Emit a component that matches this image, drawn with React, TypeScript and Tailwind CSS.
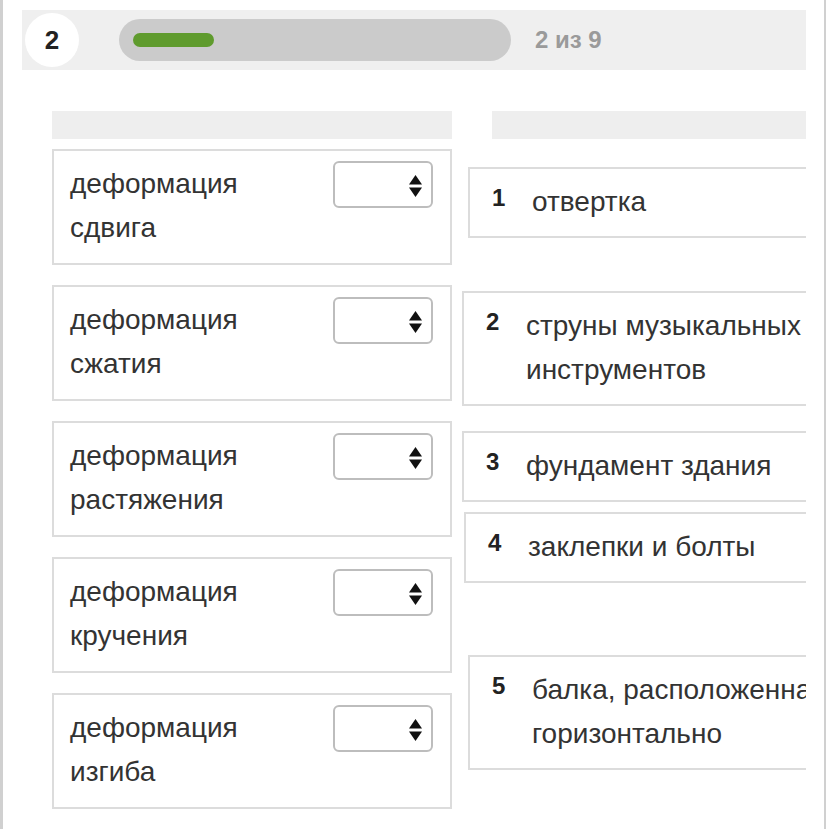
const LEFT = ["деформация сдвига", "деформация сжатия", "деформация растяжения", "деформация кручения", "деформация изгиба"];

const RIGHT: { n: number; text: string; cls: string }[] = [
  { n: 1, text: "отвертка", cls: "mt-[28px] ml-[6px]" },
  { n: 2, text: "струны музыкальных инструментов", cls: "mt-[53px] ml-0" },
  { n: 3, text: "фундамент здания", cls: "mt-[25px] ml-0" },
  { n: 4, text: "заклепки и болты", cls: "mt-[10px] ml-[2px]" },
  { n: 5, text: "балка, расположенная горизонтально", cls: "mt-[72px] ml-[6px]" }
];

function SelectBox() {
  return (
    <div className="relative h-[47px] w-[100px] shrink-0 rounded-[6px] border-2 border-[#bdbdbd] bg-white">
      <svg className="absolute right-[9px] top-[12px]" width="13" height="22" viewBox="0 0 13 22">
        <polygon points="0,9.5 6.5,0 13,9.5" fill="#111" />
        <polygon points="0,12.5 13,12.5 6.5,22" fill="#111" />
      </svg>
    </div>
  );
}

export default function App() {
  return (
    <div
      className="min-h-[829px] w-[826px] border-l-[3px] border-r-2 border-[#d0d0d0] bg-white text-[#333]"
      style={{ fontFamily: '"Liberation Sans", Arial, sans-serif' }}
    >
      <div className="ml-[19px] w-[784px] overflow-hidden pt-[10px] pb-[20px]">
        <div className="flex h-[60px] items-center bg-[#efefef]">
          <div className="ml-[3px] flex size-[54px] items-center justify-center rounded-full bg-white text-[26px] font-bold text-[#222]">
            2
          </div>
          <div className="ml-[40px] flex h-[42px] w-[392px] items-center rounded-full bg-[#cbcbcb] px-[14px]">
            <div className="h-[14px] w-[81px] rounded-full bg-[#5f9b2d]" />
          </div>
          <span className="ml-[24px] text-[24px] font-bold text-[#9a9a9a]">2 из 9</span>
        </div>

        <div className="mt-[41px] flex pl-[30px]">
          <div className="flex w-[400px] shrink-0 flex-col">
            <div className="h-[28px] bg-[#eeeeee]" />
            <div className="mt-[10px] flex flex-col gap-[20px]">
              {LEFT.map((t) => (
                <div
                  key={t}
                  className="flex h-[116px] items-start justify-between border-2 border-[#dcdcdc] pt-[10px] pr-[17px] pl-[16px]"
                >
                  <p className="m-0 mt-[1px] w-[200px] text-[28px] leading-[44px]">{t}</p>
                  <SelectBox />
                </div>
              ))}
            </div>
          </div>

          <div className="ml-[10px] flex w-[440px] shrink-0 flex-col">
            <div className="ml-[30px] h-[28px] bg-[#eeeeee]" />
            {RIGHT.map((r) => (
              <div
                key={r.n}
                className={`flex w-[420px] items-start border-2 border-[#dcdcdc] pt-[11px] pb-[12px] pl-[22px] ${r.cls}`}
              >
                <span className="w-[40px] shrink-0 text-[24px] font-bold leading-[36px] text-[#222]">{r.n}</span>
                <p className="m-0 w-[340px] text-[28px] leading-[44px]">{r.text}</p>
              </div>
            ))}
          </div>
        </div>
      </div>
    </div>
  );
}
